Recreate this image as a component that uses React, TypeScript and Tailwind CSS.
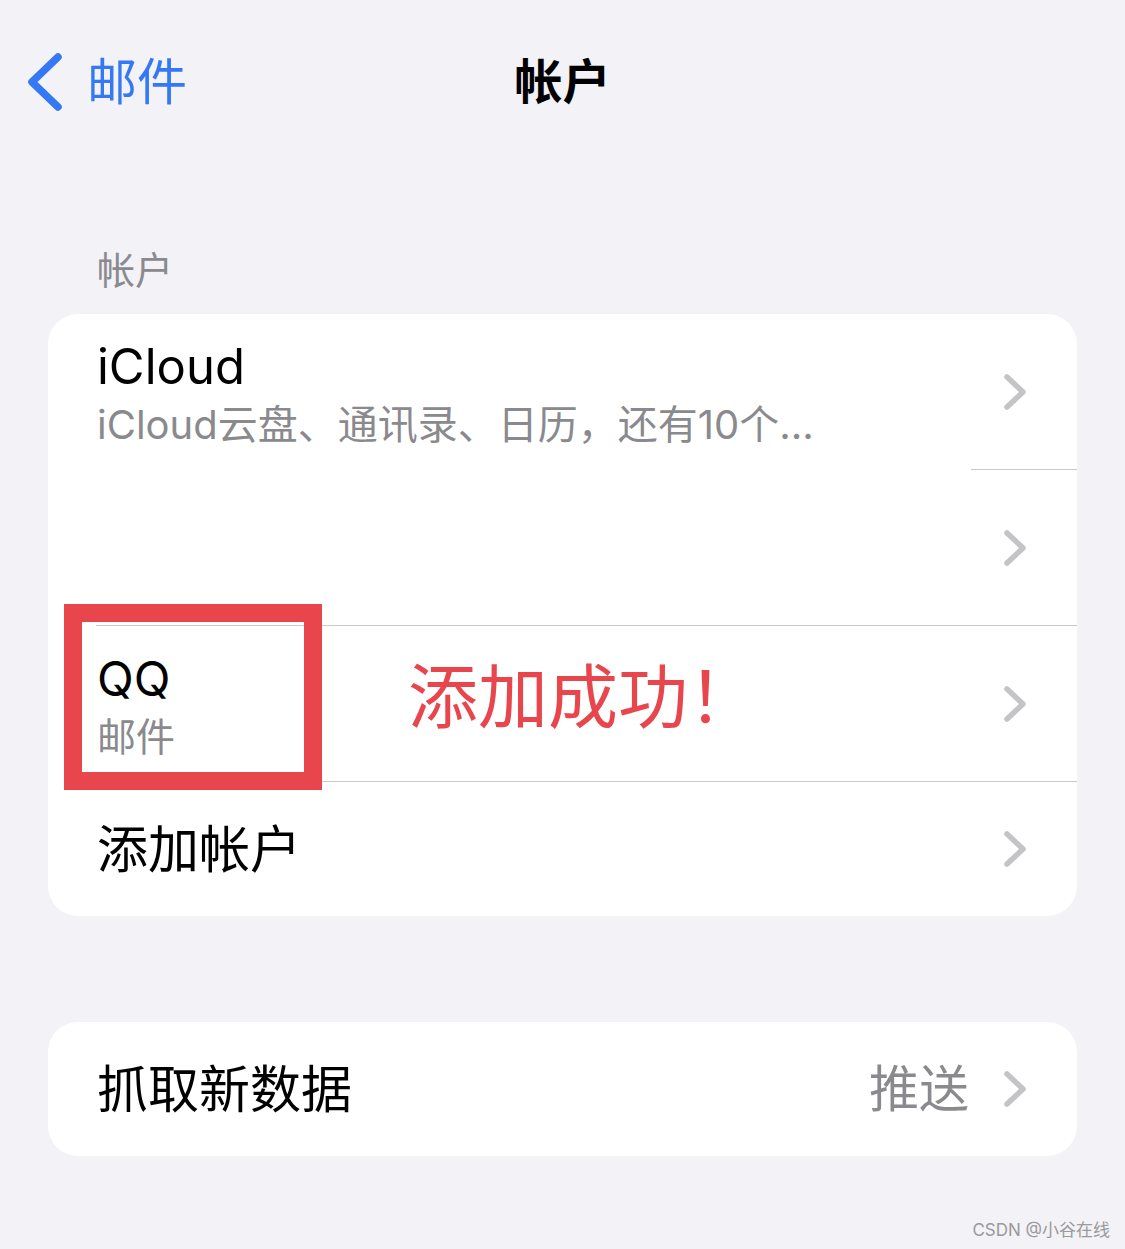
import React from "react";

const font = { fontFamily: '"Inter", "Noto Sans CJK SC", sans-serif' };

function Chevron() {
  return (
    <svg width="26" height="40" viewBox="0 0 26 40" className="shrink-0">
      <polyline
        points="5,5 21,20 5,35"
        fill="none"
        stroke="#c4c4c7"
        strokeWidth="5.5"
        strokeLinecap="round"
        strokeLinejoin="round"
      />
    </svg>
  );
}

export default function App() {
  return (
    <div
      className="relative w-[1125px] h-[1249px] bg-[#f2f2f7] overflow-hidden text-black"
      style={font}
    >
      {/* Nav bar */}
      <div className="relative h-[164px] flex items-center">
        <div className="flex items-center pl-[25px] gap-[22px]">
          <svg width="40" height="60" viewBox="0 0 40 60">
            <polyline
              points="33,5 7,30 33,55"
              fill="none"
              stroke="#3478f6"
              strokeWidth="7.5"
              strokeLinecap="round"
              strokeLinejoin="round"
            />
          </svg>
          <span className="text-[50px] leading-none text-[#3478f6]">邮件</span>
        </div>
        <div className="absolute left-0 right-0 flex justify-center pointer-events-none">
          <span className="text-[48px] leading-none font-bold">帐户</span>
        </div>
      </div>

      {/* Section header */}
      <div className="pt-[82px] pl-[97px] h-[150px]">
        <span className="text-[38px] leading-[48px] text-[#8a8a8e] block">帐户</span>
      </div>

      {/* Card 1 */}
      <div className="relative mx-[48px] w-[1029px] bg-white rounded-[30px] overflow-hidden">
        {/* iCloud */}
        <div className="h-[155px] flex items-center pl-[49px] pr-[49px]">
          <div className="flex-1 flex flex-col pt-[10px]">
            <span className="text-[49px] leading-[56px]">iCloud</span>
            <span className="text-[40px] leading-[60px] text-[#8a8a8e]">
              iCloud云盘、通讯录、日历，还有10个...
            </span>
          </div>
          <Chevron />
        </div>
        <div className="h-px ml-[923px] bg-[#c8c8cb]" />

        {/* blank row */}
        <div className="h-[155px] flex items-center pl-[49px] pr-[49px]">
          <div className="flex-1" />
          <Chevron />
        </div>
        <div className="h-px ml-[48px] bg-[#c8c8cb]" />

        {/* QQ */}
        <div className="h-[155px] flex items-center pl-[49px] pr-[49px]">
          <div className="flex-1 flex flex-col pt-[12px]">
            <span className="text-[48px] leading-[54px]">QQ</span>
            <span className="text-[39px] leading-[62px] text-[#8a8a8e]">邮件</span>
          </div>
          <Chevron />
        </div>
        <div className="h-px ml-[48px] bg-[#c8c8cb]" />

        {/* Add account */}
        <div className="h-[134px] flex items-center pl-[49px] pr-[49px]">
          <span className="flex-1 text-[51px] leading-none">添加帐户</span>
          <Chevron />
        </div>

        {/* Annotation overlays */}
        <div className="absolute left-[16px] top-[290px] w-[258px] h-[186px] border-[18px] border-[#e8464c]" />
        <div className="absolute left-[360px] top-[346px] text-[70px] leading-[76px] text-[#e8464c]">
          添加成功！
        </div>
      </div>

      {/* Card 2 */}
      <div className="mt-[106px] mx-[48px] w-[1029px] h-[134px] bg-white rounded-[30px] flex items-center pl-[49px] pr-[49px]">
        <span className="flex-1 text-[51px] leading-none">抓取新数据</span>
        <span className="text-[50px] leading-none text-[#8a8a8e] mr-[33px]">推送</span>
        <Chevron />
      </div>

      {/* Watermark */}
      <div className="absolute right-[15px] bottom-[8px] text-[17px] leading-[22px] text-[#9a9a9a]">
        CSDN @小谷在线
      </div>
    </div>
  );
}
